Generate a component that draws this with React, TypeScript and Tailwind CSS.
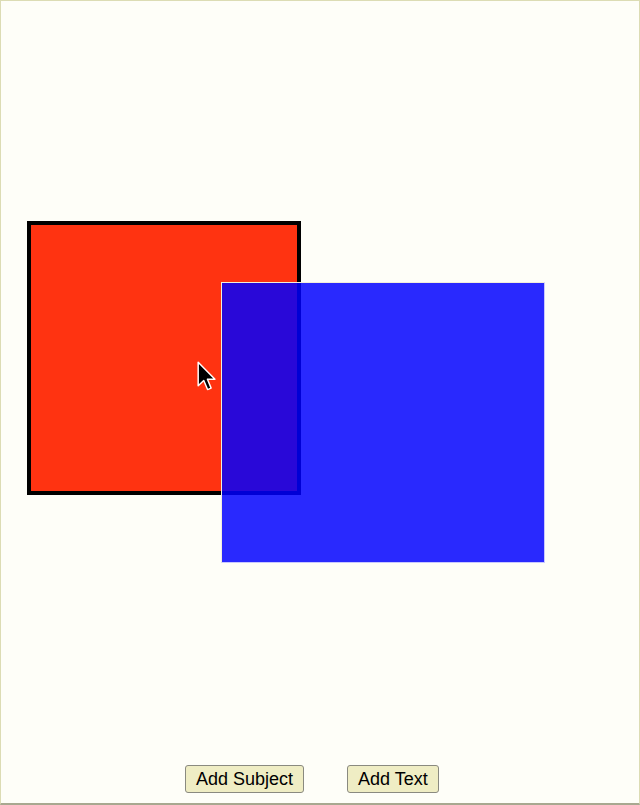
import React from "react";

export default function App() {
  return (
    <div className="w-[640px] h-[805px] flex flex-col bg-[#fefef8] border border-[#dcdcb4] border-b-2 border-b-[#a8a890] font-['Liberation_Sans',Arial,sans-serif] overflow-hidden">
      <div className="relative flex-1">
        <div className="absolute left-[26px] top-[220px] w-[274px] h-[274px] bg-[#ff3311] border-4 border-black" />
        <div className="absolute left-[220px] top-[281px] w-[324px] h-[281px] bg-[rgba(0,0,255,0.84)] border border-[#f2eedc] border-r-[#c8c8ff] border-b-[#c8c8ff]" />
        <svg
          className="absolute left-[196px] top-[360px]"
          width="20"
          height="31"
          viewBox="-0.8 -0.8 13.6 21"
        >
          <path
            d="M0 0 L0 16 L3.8 12.4 L6.4 18.6 L8.8 17.6 L6.3 11.6 L11.4 11.6 Z"
            fill="#000"
            stroke="#fff"
            strokeWidth="1"
            strokeLinejoin="round"
          />
        </svg>
      </div>
      <div className="flex pl-[184px] gap-[43px] pb-[10px]">
        <button className="h-[28px] px-[10px] text-[18px] leading-none text-black bg-[#efedc4] border border-[#8a8a80] rounded-[3px]">
          Add Subject
        </button>
        <button className="h-[28px] px-[10px] text-[18px] leading-none text-black bg-[#efedc4] border border-[#8a8a80] rounded-[3px]">
          Add Text
        </button>
      </div>
    </div>
  );
}
